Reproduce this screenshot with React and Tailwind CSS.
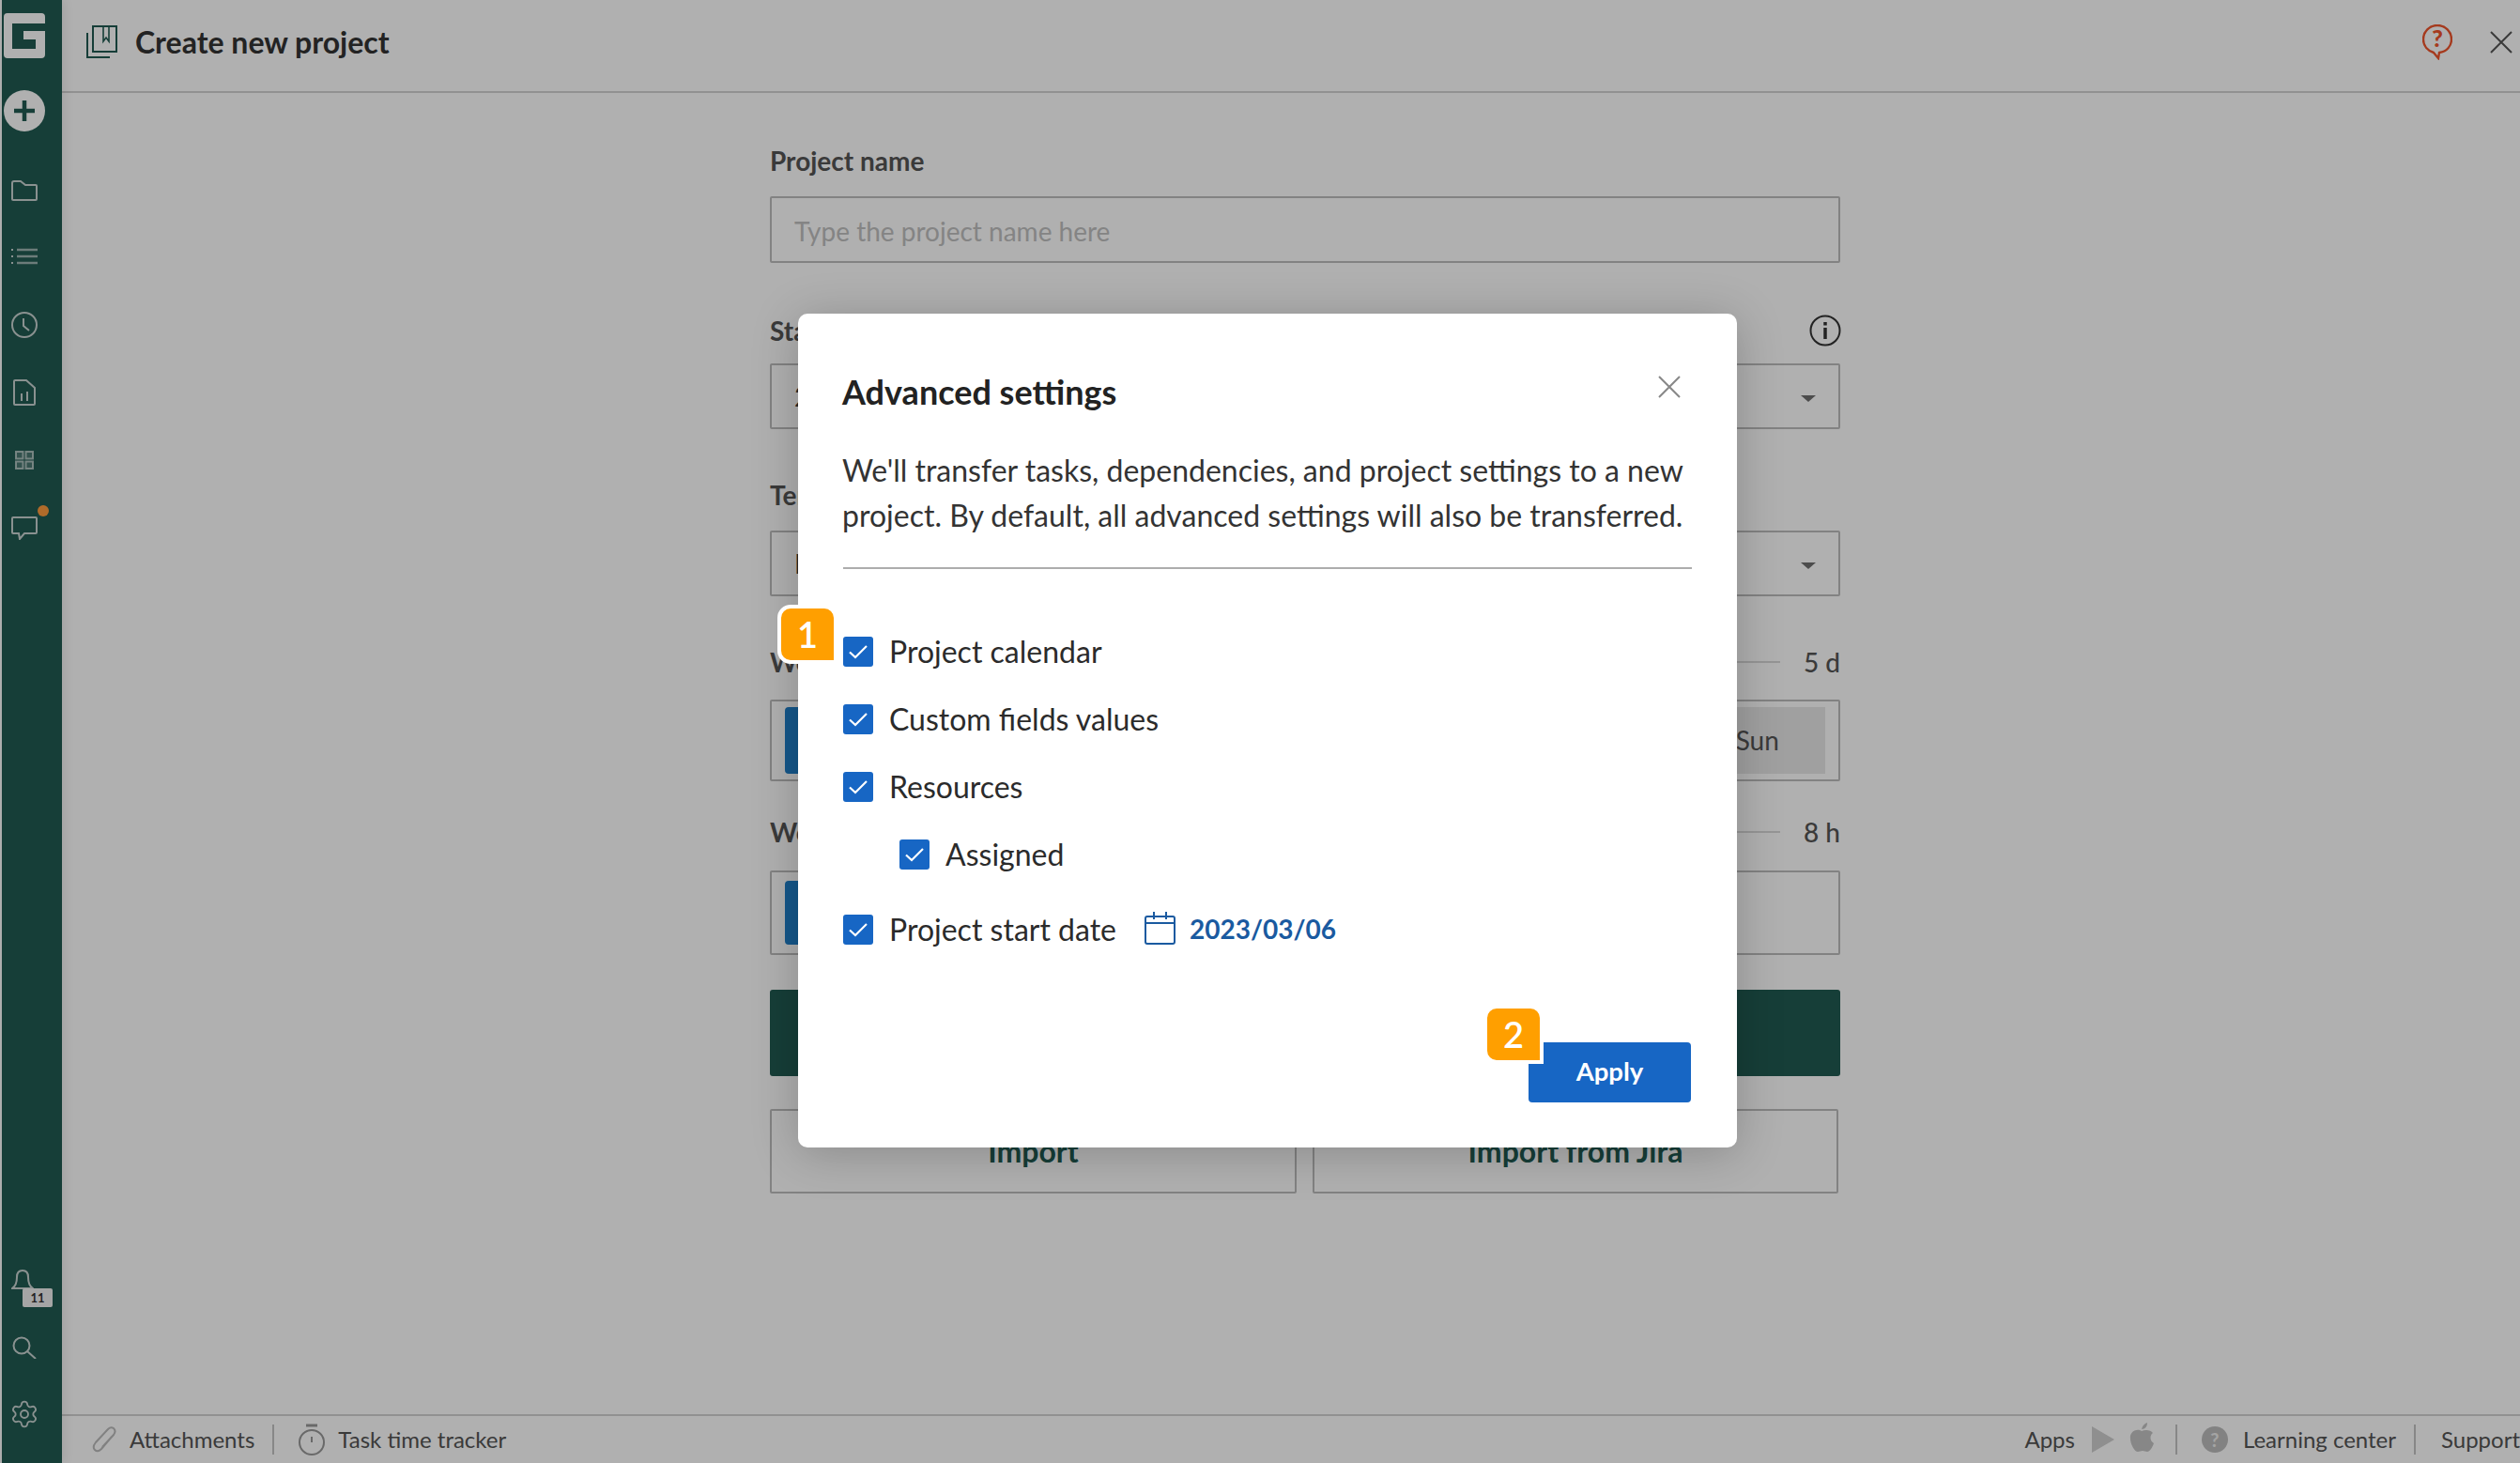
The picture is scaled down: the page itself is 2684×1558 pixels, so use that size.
import React from "react";
import { Settings } from "lucide-react";

const Svg = ({ w, h, children, className = "", vb }) => (
  <svg width={w} height={h} viewBox={vb || `0 0 ${w} ${h}`} fill="none" stroke="currentColor" strokeWidth="2" className={"shrink-0 " + className}>
    {children}
  </svg>
);

const Check = () => (
  <span className="flex h-[32px] w-[32px] shrink-0 items-center justify-center rounded-[3px] bg-[#1766c4]">
    <svg width="22" height="18" viewBox="0 0 22 18" fill="none" stroke="#fff" strokeWidth="2.2">
      <path d="M2 9.5 L8 15 L20 3" />
    </svg>
  </span>
);

const Caret = () => <span className="ml-auto mr-[24px] mt-[4px] h-0 w-0 border-x-[8px] border-t-[7px] border-x-transparent border-t-[#6f6f6f]" />;

const Row = ({ children, className = "", text }) => (
  <div className={"flex h-[32px] items-center gap-[17px] " + className}>
    <Check />
    <span className="text-[32px] leading-[32px] text-[#2b2b2b]">{text}</span>
    {children}
  </div>
);

const Sep = () => <span className="h-[32px] w-[2px] bg-[#c4c4c4]" />;

export default function App() {
  return (
    <div className="relative flex h-screen w-screen overflow-hidden bg-white font-['Lato','Noto_Sans',sans-serif] text-[#3a3a3a]">
      <aside className="z-10 ml-[2px] flex h-full w-[64px] shrink-0 flex-col bg-[#205a51] text-[#f2f2f2] shadow-[3px_0_10px_rgba(0,0,0,0.08)]">
        <div className="flex h-full w-[48px] flex-col items-center">
          <svg width="44" height="48" viewBox="0 0 44 48" fill="#ffffff" className="mt-[14px]">
            <path d="M4 0H40Q44 0 44 4V11H9V38H34V28H21V19H44V44Q44 48 40 48H4Q0 48 0 44V4Q0 0 4 0Z" />
          </svg>
          <svg width="44" height="44" viewBox="0 0 44 44" className="mt-[34px]">
            <circle cx="22" cy="22" r="22" fill="#fff" />
            <path d="M22 11V33M11 22H33" stroke="#205a51" strokeWidth="4.5" />
          </svg>
          <Svg w={28} h={22} className="mt-[52px] opacity-80">
            <path d="M1 3Q1 1 3 1H10L15 5H26Q27 5 27 6V20Q27 21 26 21H2Q1 21 1 20Z" />
          </Svg>
          <Svg w={28} h={18} className="mt-[50px] opacity-80">
            <path d="M6 2H28M6 9H28M6 16H28" strokeWidth="2.5" opacity=".75" />
            <path d="M0 2H2M0 9H2M0 16H2" strokeWidth="2" />
          </Svg>
          <Svg w={28} h={28} className="mt-[50px] opacity-80">
            <circle cx="14" cy="14" r="13" />
            <path d="M13 7V15L19 20" />
          </Svg>
          <Svg w={24} h={28} className="mt-[44px] opacity-80">
            <path d="M2 1H14L23 9V26Q23 27 22 27H2Q1 27 1 26V2Q1 1 2 1Z" />
            <path d="M9 15V23M15 13V23" />
          </Svg>
          <Svg w={20} h={20} className="mt-[48px] opacity-80">
            <g fill="currentColor" fillOpacity=".25" strokeOpacity=".8">
              <rect x="1" y="1" width="7.5" height="7.5" />
              <rect x="11.5" y="1" width="7.5" height="7.5" />
              <rect x="1" y="11.5" width="7.5" height="7.5" />
              <rect x="11.5" y="11.5" width="7.5" height="7.5" />
            </g>
          </Svg>
          <div className="relative mt-[50px] h-[25px] w-[28px]">
            <Svg w={28} h={25} className="opacity-80">
              <path d="M2 1H26Q27 1 27 2V17Q27 18 26 18H14L9 24L8 18H2Q1 18 1 17V2Q1 1 2 1Z" />
            </Svg>
            <span className="absolute left-[28px] top-[-12px] h-[12px] w-[12px] rounded-full bg-[#ff9c3d]" />
          </div>
          <div className="relative mt-auto h-[25px] w-[28px]">
            <Svg w={24} h={25} className="opacity-80">
              <path d="M1 20Q6 17 6 8Q6 1 12 1Q18 1 18 8Q18 17 23 20Z" />
            </Svg>
            <span className="absolute left-[12px] top-[20px] flex h-[20px] w-[32px] items-center justify-center rounded-[2px] bg-[#f0f0f0] text-[13px] font-bold leading-none text-[#333]">11</span>
          </div>
          <Svg w={26} h={24} className="mt-[46px] opacity-80">
            <circle cx="10" cy="10" r="8.5" />
            <path d="M16 16L25 24" />
          </Svg>
          <Settings size={32} strokeWidth={1.4} className="mb-[36px] mt-[43px] shrink-0 opacity-80" />
        </div>
      </aside>

      <main className="flex h-full min-w-0 flex-1 flex-col">
        <header className="flex h-[99px] shrink-0 items-center border-b-2 border-[#d2d2d2] pb-[8px] pl-[26px] pr-[8px]">
          <Svg w={33} h={35} className="text-[#205a51]">
            <path d="M7 1H32V28H7ZM1 8V34H25" />
            <path d="M18 1V17L21 13L24 17V1" strokeWidth="1.6" />
          </Svg>
          <h1 className="ml-[19px] text-[32px] font-bold leading-none text-[#333]">Create new project</h1>
          <Svg w={32} h={38} className="ml-auto text-[#f0552c]">
            <path d="M16 1C7.5 1 1 7.5 1 16C1 23 6 28 12 30L17 36L18 30C26 29 31 23 31 16C31 7.5 24.5 1 16 1Z" strokeWidth="2.4" />
            <text x="16" y="24" textAnchor="middle" fontSize="25" fontWeight="900" fill="currentColor" stroke="none" fontFamily="Lato">?</text>
          </Svg>
          <Svg w={24} h={24} className="ml-[40px] text-[#555]">
            <path d="M1 1L23 23M23 1L1 23" />
          </Svg>
        </header>

        <div className="min-h-0 flex-1 overflow-hidden pl-[754px] pt-[56px]">
          <div className="w-[1140px]">
            <div className="text-[28px] font-bold leading-[32px] text-[#555]">Project name</div>
            <div className="mt-[22px] flex h-[71px] items-center rounded-[2px] border-2 border-[#bdbdbd] px-[24px] pt-[2px] text-[28px] text-[#c0c0c0]">Type the project name here</div>

            <div className="mt-[56px] flex h-[32px] items-center justify-between text-[28px] font-bold leading-[32px] text-[#555]">
              <span>Start date</span>
              <Svg w={34} h={34} className="mr-[-1px] text-[#333]">
                <circle cx="17" cy="17" r="15.5" />
                <path d="M17 14V26" strokeWidth="3.5" />
                <path d="M17 8V11.5" strokeWidth="3.5" />
              </Svg>
            </div>
            <div className="mt-[19px] flex h-[70px] items-center rounded-[2px] border-2 border-[#bdbdbd] pl-[24px] text-[28px]">2023/03/06<Caret /></div>

            <div className="mt-[54px] text-[28px] font-bold leading-[32px] text-[#555]">Template</div>
            <div className="mt-[22px] flex h-[70px] items-center rounded-[2px] border-2 border-[#bdbdbd] pl-[24px] text-[28px]">Blank project<Caret /></div>

            <div className="mt-[54px] flex h-[32px] items-center text-[28px] font-bold leading-[32px] text-[#555]">
              <span>Working days</span>
              <span className="ml-[20px] h-[2px] flex-1 bg-[#d8d8d8]" />
              <span className="ml-[24px] w-[40px] whitespace-nowrap text-right text-[28px] font-medium">5 d</span>
            </div>
            <div className="mt-[24px] flex h-[87px] gap-[16px] rounded-[2px] border-2 border-[#bdbdbd] px-[14px] py-[6px] text-[28px]">
              {["Mon", "Tue", "Wed", "Thu", "Fri"].map((d) => (
                <span key={d} className="flex flex-1 items-center justify-center rounded-[4px] bg-[#1f7fc8] pb-[2px] text-white">{d}</span>
              ))}
              {["Sat", "Sun"].map((d) => (
                <span key={d} className="flex flex-1 items-center justify-center bg-[#e8e8e8] pb-[2px] text-[#555]">{d}</span>
              ))}
            </div>

            <div className="mt-[38px] flex h-[32px] items-center text-[28px] font-bold leading-[32px] text-[#555]">
              <span>Working hours</span>
              <span className="ml-[20px] h-[2px] flex-1 bg-[#d8d8d8]" />
              <span className="ml-[24px] w-[40px] whitespace-nowrap text-right text-[28px] font-medium">8 h</span>
            </div>
            <div className="mt-[25px] flex h-[90px] rounded-[2px] border-2 border-[#bdbdbd] px-[14px] py-[9px]">
              <span className="w-[700px] rounded-[4px] bg-[#1f7fc8]" />
            </div>

            <div className="mt-[37px] flex h-[92px] items-center justify-center rounded-[3px] bg-[#205a51] text-[30px] font-bold text-white">Create project</div>

            <div className="mt-[35px] flex w-[1138px] gap-[17px] text-[32px] font-bold text-[#205a51]">
              <div className="flex h-[90px] w-[561px] items-center justify-center rounded-[2px] border-2 border-[#bdbdbd]">Import</div>
              <div className="flex h-[90px] flex-1 items-center justify-center rounded-[2px] border-2 border-[#bdbdbd]">Import from Jira</div>
            </div>
          </div>
        </div>

        <footer className="flex h-[52px] shrink-0 items-center border-t-2 border-[#d2d2d2] text-[24px] text-[#555]">
          <Svg w={26} h={30} className="ml-[32px] text-[#bbb]">
            <path d="M21 12L10 25Q6 29 3 26Q0 23 4 18L17 4Q20 1 23 3Q26 6 23 10L11 23" />
          </Svg>
          <span className="ml-[14px]">Attachments</span>
          <span className="ml-[19px] flex"><Sep /></span>
          <Svg w={28} h={34} className="ml-[26px] text-[#999]">
            <circle cx="14" cy="20" r="13" />
            <path d="M8 2H20" strokeWidth="3" />
            <path d="M14 14V20" strokeWidth="2" />
          </Svg>
          <span className="ml-[14px]">Task time tracker</span>
          <span className="ml-auto">Apps</span>
          <svg width="24" height="28" viewBox="0 0 24 28" className="ml-[18px] shrink-0" fill="#cfcfcf">
            <path d="M0 0L24 14L0 28Z" />
          </svg>
          <svg width="26" height="32" viewBox="0 0 26 32" className="mb-[4px] ml-[16px] shrink-0" fill="#c4c4c4">
            <path d="M13 9C10 7 3 7 1 14C0 21 5 31 9 31C11 31 12 30 14 30C16 30 17 31 19 31C22 31 25 25 26 22C22 20 21 14 25 11C23 8 17 7 13 9ZM13 7C14 3 16 1 19 0C19 4 17 7 13 7Z" />
          </svg>
          <span className="ml-[23px] flex"><Sep /></span>
          <span className="ml-[26px] flex h-[28px] w-[28px] items-center justify-center rounded-full bg-[#bdbdbd] text-[20px] font-bold text-[#eee]">?</span>
          <span className="ml-[16px]">Learning center</span>
          <span className="ml-[19px] flex"><Sep /></span>
          <span className="ml-[27px] w-[84px] whitespace-nowrap">Support</span>
        </footer>
      </main>

      <div className="absolute inset-0 z-20 bg-black/[.31]">
        <div className="absolute left-[850px] top-[334px] h-[888px] w-[1000px] rounded-[10px] bg-white pl-[48px] pr-[48px] pt-[59px] shadow-[0_6px_50px_rgba(0,0,0,0.22)]">
          <div className="relative">
            <h2 className="ml-[-1px] text-[36px] font-bold leading-[48px] text-[#222]">Advanced settings</h2>
            <Svg w={24} h={24} className="absolute right-[12px] top-[7px] text-[#888]">
              <path d="M1 1L23 23M23 1L1 23" />
            </Svg>
          </div>
          <p className="ml-[-1px] mt-[36px] whitespace-nowrap text-[32px] leading-[48px] text-[#333]">
            We'll transfer tasks, dependencies, and project settings to a new
            <br />
            project. By default, all advanced settings will also be transferred.
          </p>
          <div className="mt-[31px] h-[2px] w-[904px] bg-[#adadad]" />

          <div className="mt-[72px] flex flex-col">
            <Row text="Project calendar" />
            <Row text="Custom fields values" className="mt-[40px]" />
            <Row text="Resources" className="mt-[40px]" />
            <Row text="Assigned" className="ml-[60px] mt-[40px]" />
            <Row text="Project start date" className="mt-[48px]">
              <span className="ml-[13px] flex items-center gap-[15px]">
                <Svg w={33} h={36} className="mb-[4px] text-[#1a5aa0]">
                  <path d="M3 6H30Q32 6 32 8V33Q32 35 30 35H3Q1 35 1 33V8Q1 6 3 6ZM1 13H32M10 1V9M23 1V9" />
                </Svg>
                <span className="mb-[2px] text-[28px] font-bold leading-none text-[#1a5aa0]">2023/03/06</span>
              </span>
            </Row>
          </div>

          <div className="mr-[1px] mt-[104px] flex justify-end">
            <button className="flex h-[64px] w-[173px] items-center justify-center rounded-[4px] bg-[#1766c4] pb-[2px] text-[27.5px] font-bold text-white">Apply</button>
          </div>

          <span className="absolute left-[-22px] top-[310px] flex h-[63px] w-[64px] items-center justify-center rounded-[14px] rounded-br-none border-[4px] border-white bg-[#ff9f00] text-[38px] font-semibold text-white">1</span>
          <span className="absolute left-[730px] top-[736px] flex h-[63px] w-[64px] items-center justify-center rounded-[14px] rounded-br-none border-[4px] border-white bg-[#ff9f00] text-[38px] font-semibold text-white">2</span>
        </div>
      </div>
    </div>
  );
}
